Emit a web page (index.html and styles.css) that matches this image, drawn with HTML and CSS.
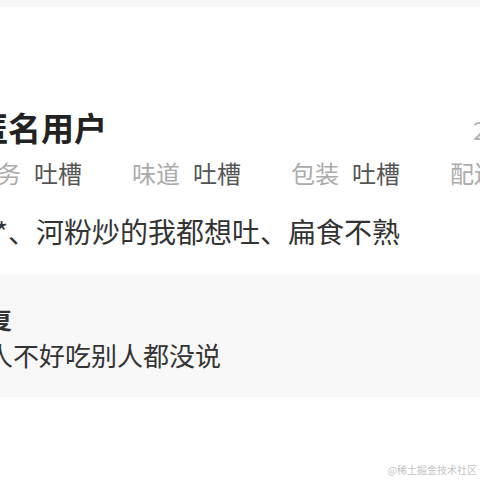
FILE: index.html
```html
<!DOCTYPE html>
<html lang="zh-CN">
<head>
<meta charset="utf-8">
<link rel="stylesheet" href="styles.css">
</head>
<body>
<div class="topbar"></div>
<div class="review">
  <div class="head">
    <span class="name">匿名用户</span>
    <span class="date">2021-07-12</span>
  </div>
  <div class="ratings">
    <div class="rate"><span class="label">服务</span><span class="value">吐槽</span></div>
    <div class="rate"><span class="label">味道</span><span class="value">吐槽</span></div>
    <div class="rate"><span class="label">包装</span><span class="value">吐槽</span></div>
    <div class="rate"><span class="label">配送</span><span class="value">吐槽</span></div>
  </div>
  <p class="comment">*、河粉炒的我都想吐、扁食不熟</p>
  <div class="reply">
    <div class="reply-title">商家回复</div>
    <div class="reply-text">人不好吃别人都没说</div>
  </div>
</div>
<div class="watermark">@稀土掘金技术社区</div>
</body>
</html>
```
FILE: styles.css
```css
html, body {
  margin: 0;
  padding: 0;
  width: 480px;
  height: 480px;
  overflow: hidden;
  background: #ffffff;
  font-family: "Noto Sans CJK SC", "Noto Sans", sans-serif;
}

.topbar {
  height: 7px;
  background: #f7f7f7;
}

.review {
  margin-left: -27px;
  width: 560px;
  padding-top: 104px;
}

.head {
  display: flex;
  align-items: flex-end;
  height: 33px;
}

.name {
  margin-left: 2px;
  font-size: 33px;
  line-height: 33px;
  font-weight: 700;
  color: #222222;
  white-space: nowrap;
}

.date {
  margin-left: 366px;
  font-size: 24px;
  line-height: 28px;
  color: #b5b5b5;
  white-space: nowrap;
}

.ratings {
  display: flex;
  gap: 50px;
  margin-top: 17px;
  font-size: 24px;
  line-height: 24px;
  white-space: nowrap;
}

.label {
  color: #ababab;
  margin-right: 13px;
}

.value {
  color: #555555;
}

.comment {
  margin: 32px 0 0 22px;
  font-size: 28px;
  line-height: 28px;
  color: #333333;
  white-space: nowrap;
}

.reply {
  margin-top: 29px;
  background: #f8f8f8;
  padding: 33px 0 29px 0;
}

.reply-title {
  margin-left: -57px;
  font-size: 24px;
  line-height: 24px;
  font-weight: 700;
  color: #333333;
  white-space: nowrap;
}

.reply-text {
  margin-top: 11px;
  margin-left: 14px;
  font-size: 26px;
  line-height: 26px;
  color: #333333;
  white-space: nowrap;
}

.watermark {
  position: absolute;
  right: 3px;
  top: 463px;
  font-size: 10px;
  line-height: 14px;
  color: #c4c4c4;
  white-space: nowrap;
}
```
